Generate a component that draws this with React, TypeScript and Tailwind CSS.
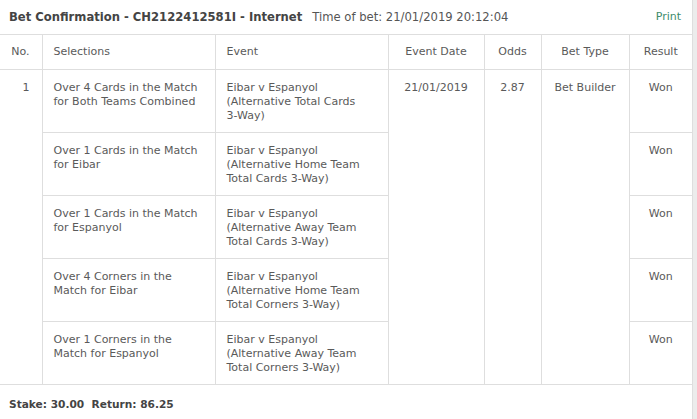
import React from "react";

const rows = [
  {
    sel: ["Over 4 Cards in the Match", "for Both Teams Combined"],
    ev: ["Eibar v Espanyol", "(Alternative Total Cards", "3-Way)"],
  },
  {
    sel: ["Over 1 Cards in the Match", "for Eibar"],
    ev: ["Eibar v Espanyol", "(Alternative Home Team", "Total Cards 3-Way)"],
  },
  {
    sel: ["Over 1 Cards in the Match", "for Espanyol"],
    ev: ["Eibar v Espanyol", "(Alternative Away Team", "Total Cards 3-Way)"],
  },
  {
    sel: ["Over 4 Corners in the", "Match for Eibar"],
    ev: ["Eibar v Espanyol", "(Alternative Home Team", "Total Corners 3-Way)"],
  },
  {
    sel: ["Over 1 Corners in the", "Match for Espanyol"],
    ev: ["Eibar v Espanyol", "(Alternative Away Team", "Total Corners 3-Way)"],
  },
];

export default function App() {
  const font = { fontFamily: '"DejaVu Sans", Verdana, sans-serif' };
  return (
    <div className="flex w-[697px] h-[419px] bg-white overflow-hidden" style={font}>
      <div className="w-[692px] flex flex-col text-[11px] leading-[14px] text-[#5a5a5a]">
        <div className="h-[34px] flex items-center pl-[9px]">
          <span className="font-bold text-[#444] text-[11.6px]">Bet Confirmation - CH2122412581I - Internet</span>
          <span className="ml-[10px] text-[11.6px] text-[#555]">Time of bet: 21/01/2019 20:12:04</span>
          <span className="ml-auto mr-[11px] text-[#3d8c6b]">Print</span>
        </div>
        <table className="table-fixed border-collapse w-[692px]">
          <colgroup>
            <col className="w-[42px]" />
            <col className="w-[173px]" />
            <col className="w-[173px]" />
            <col className="w-[96px]" />
            <col className="w-[57px]" />
            <col className="w-[88px]" />
            <col className="w-[63px]" />
          </colgroup>
          <thead>
            <tr className="h-[35px] border-t border-b border-[#dedede]">
              <th className="font-normal text-right pr-[12px] border-r border-[#dedede]">No.</th>
              <th className="font-normal text-left pl-[11px] border-r border-[#dedede]">Selections</th>
              <th className="font-normal text-left pl-[11px] border-r border-[#dedede]">Event</th>
              <th className="font-normal text-center border-r border-[#dedede]">Event Date</th>
              <th className="font-normal text-center border-r border-[#dedede]">Odds</th>
              <th className="font-normal text-center border-r border-[#dedede]">Bet Type</th>
              <th className="font-normal text-center">Result</th>
            </tr>
          </thead>
          <tbody>
            {rows.map((r, i) => (
              <tr key={i} className="h-[63px]">
                {i === 0 && (
                  <td rowSpan={5} className="align-top text-right pr-[12px] pt-[11px] border-r border-b border-[#dedede]">
                    1
                  </td>
                )}
                <td className="align-top pl-[11px] pt-[11px] border-r border-b border-[#dedede]">
                  {r.sel.map((l, j) => (
                    <div key={j}>{l}</div>
                  ))}
                </td>
                <td className="align-top pl-[11px] pt-[11px] border-r border-b border-[#dedede]">
                  {r.ev.map((l, j) => (
                    <div key={j}>{l}</div>
                  ))}
                </td>
                {i === 0 && (
                  <>
                    <td rowSpan={5} className="align-top text-center pt-[11px] border-r border-b border-[#dedede]">
                      21/01/2019
                    </td>
                    <td rowSpan={5} className="align-top text-center pt-[11px] border-r border-b border-[#dedede]">
                      2.87
                    </td>
                    <td rowSpan={5} className="align-top text-center pt-[11px] border-r border-b border-[#dedede]">
                      Bet Builder
                    </td>
                  </>
                )}
                <td className="align-top text-center pt-[11px] border-b border-[#dedede]">Won</td>
              </tr>
            ))}
          </tbody>
        </table>
        <div className="pl-[9px] pt-[12px] font-bold text-[10.6px] text-[#444]">
          Stake: 30.00&nbsp; Return: 86.25
        </div>
      </div>
      <div className="w-[5px] h-full border-l border-[#dedede] bg-[#ececec]" />
    </div>
  );
}
